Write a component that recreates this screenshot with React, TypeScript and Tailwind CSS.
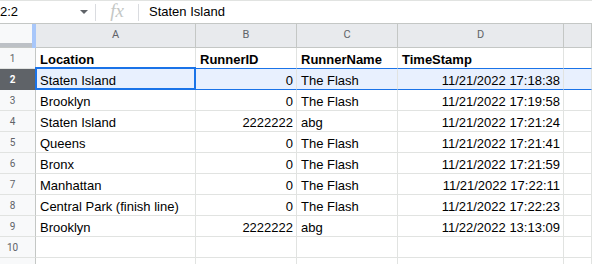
import React from "react";

const data: string[][] = [
  ["Staten Island", "0", "The Flash", "11/21/2022 17:18:38"],
  ["Brooklyn", "0", "The Flash", "11/21/2022 17:19:58"],
  ["Staten Island", "2222222", "abg", "11/21/2022 17:21:24"],
  ["Queens", "0", "The Flash", "11/21/2022 17:21:41"],
  ["Bronx", "0", "The Flash", "11/21/2022 17:21:59"],
  ["Manhattan", "0", "The Flash", "11/21/2022 17:22:11"],
  ["Central Park (finish line)", "0", "The Flash", "11/21/2022 17:22:23"],
  ["Brooklyn", "2222222", "abg", "11/22/2022 13:13:09"],
];

const font = { fontFamily: '"Liberation Sans", Arial, sans-serif' };

function RowHeader({ n, selected }: { n?: number; selected?: boolean }) {
  return (
    <div
      className={
        "h-[21px] border-r border-b border-r-[#c4c7c5] flex items-center justify-center pr-[10px] pt-[1px] text-[10px] " +
        (selected
          ? "bg-[#5f6368] text-white font-bold border-b-[#5f6368]"
          : "bg-[#f8f9fa] text-[#5f6368] border-b-[#e1e3e1]")
      }
      style={{ fontFamily: 'Roboto, "Liberation Sans", sans-serif' }}
    >
      {n}
    </div>
  );
}

function Cell({
  text,
  right,
  bold,
  sel,
  blueBottom,
  active,
}: {
  text?: string;
  right?: boolean;
  bold?: boolean;
  sel?: boolean;
  blueBottom?: boolean;
  active?: boolean;
}) {
  return (
    <div
      className={
        "relative h-[21px] border-r border-b border-r-[#e1e3e1] flex items-end pb-0 leading-[16px] text-[13px] text-black whitespace-nowrap overflow-visible " +
        (right ? "justify-end pr-[3px] " : "pl-[4px] ") +
        (bold ? "font-bold " : "") +
        (sel ? "bg-[#e8f0fe] " : "bg-white ") +
        (blueBottom || sel ? "border-b-[#1a73e8]" : "border-b-[#e1e3e1]")
      }
      style={font}
    >
      {text}
      {active && (
        <div className="absolute -left-[1px] -top-[2px] -right-[1px] -bottom-[1px] border-2 border-[#1a73e8] pointer-events-none" />
      )}
    </div>
  );
}

export default function App() {
  const cols = ["A", "B", "C", "D", ""];
  return (
    <div className="w-[592px] h-[264px] overflow-hidden bg-white">
      {/* formula bar */}
      <div
        className="h-[24px] border-t border-t-[#e1e3e1] border-b border-b-[#c4c7c5] flex items-center text-[13px] text-black"
        style={font}
      >
        <div className="w-[80px] pl-0">2:2</div>
        <div className="w-[15px] flex items-center justify-start">
          <svg width="8" height="4" viewBox="0 0 8 4">
            <path d="M0 0 L8 0 L4 4 Z" fill="#5f6368" />
          </svg>
        </div>
        <div className="w-px h-[17px] bg-[#dadce0]" />
        <div
          className="w-[42px] flex items-center justify-center text-[19px] italic text-[#c4c7c5] -mt-[2px]"
          style={{ fontFamily: '"Liberation Serif", serif' }}
        >
          fx
        </div>
        <div className="w-px h-[17px] bg-[#dadce0]" />
        <div className="pl-[10px]">Staten Island</div>
      </div>

      {/* grid */}
      <div className="grid grid-cols-[36px_160px_101px_101px_166px_1fr]">
        {/* header row */}
        <div className="relative h-[24px] bg-[#f8f9fa] border-b border-b-[#c4c7c5]">
          <div className="absolute left-0 bottom-0 w-[32px] h-[4px] bg-[#bdc1c6]" />
          <div className="absolute left-[32px] top-0 w-[4px] h-[24px] bg-[#a8c7fa]" />
        </div>
        {cols.map((c, i) => (
          <div
            key={i}
            className="h-[24px] bg-[#e8eaed] border-r border-r-[#c4c7c5] border-b border-b-[#c4c7c5] flex items-center justify-center text-[11px] text-[#5f6368]"
            style={{ fontFamily: 'Roboto, "Liberation Sans", sans-serif' }}
          >
            {c}
          </div>
        ))}

        {/* row 1 */}
        <RowHeader n={1} />
        <Cell text="Location" bold blueBottom />
        <Cell text="RunnerID" bold blueBottom />
        <Cell text="RunnerName" bold blueBottom />
        <Cell text="TimeStamp" bold blueBottom />
        <Cell blueBottom />

        {data.map((r, idx) => {
          const n = idx + 2;
          const sel = n === 2;
          return (
            <React.Fragment key={n}>
              <RowHeader n={n} selected={sel} />
              <Cell text={r[0]} sel={sel} active={sel} />
              <Cell text={r[1]} right sel={sel} />
              <Cell text={r[2]} sel={sel} />
              <Cell text={r[3]} right sel={sel} />
              <Cell sel={sel} />
            </React.Fragment>
          );
        })}

        <RowHeader n={10} />
        <Cell />
        <Cell />
        <Cell />
        <Cell />
        <Cell />

        <RowHeader />
        <Cell />
        <Cell />
        <Cell />
        <Cell />
        <Cell />
      </div>
    </div>
  );
}
